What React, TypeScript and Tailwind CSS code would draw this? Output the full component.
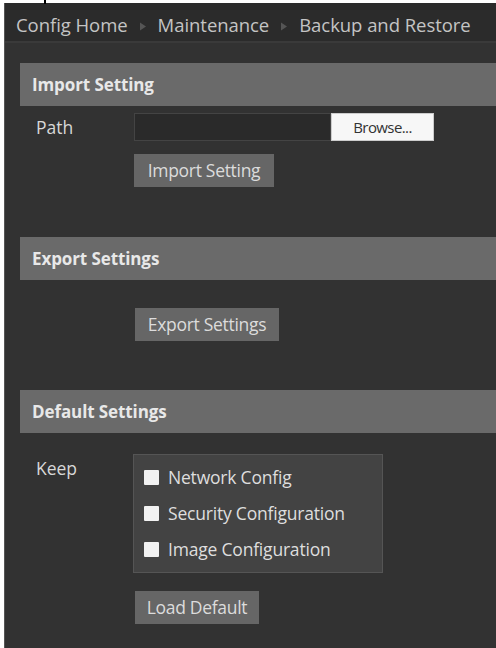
import React from "react";

const font = { fontFamily: '"Open Sans", "Noto Sans", "Liberation Sans", sans-serif' };

function Header({ title }: { title: string }) {
  return (
    <div className="ml-[15px] h-[43px] bg-[#6a6a6a] flex items-center pl-[12px]">
      <span className="text-[17px] font-bold text-[#e8e8e8] tracking-[-0.1px]">{title}</span>
    </div>
  );
}

function Btn({ label, w }: { label: string; w: string }) {
  return (
    <div
      className={`${w} h-[33px] bg-[#666666] flex items-center justify-center text-[17.5px] text-[#dcdcdc] tracking-[-0.3px]`}
    >
      {label}
    </div>
  );
}

function Tri() {
  return (
    <svg width="8" height="9" viewBox="0 0 8 9" className="mx-[11px] mt-[2px]">
      <path d="M1 0.5 L7 4.5 L1 8.5 Z" fill="#555555" />
    </svg>
  );
}

function Check({ label }: { label: string }) {
  return (
    <div className="flex items-center h-[36px]">
      <div className="w-[15px] h-[15px] bg-[#f2f2f2] rounded-[1px]" />
      <span className="ml-[9px] text-[17.5px] text-[#dedede] tracking-[-0.2px]">{label}</span>
    </div>
  );
}

export default function App() {
  return (
    <div className="relative w-[496px] h-[648px] bg-white pt-[3px] pl-[4px]" style={font}>
      <div className="absolute left-[44px] top-0 w-[2px] h-[4px] bg-black" />
      <div className="h-[645px] bg-[#323232] border-l border-[#555]">
        <div className="h-[40px] bg-[#2b2b2b] border-b-[2px] border-[#3a3a3a] flex items-center pl-[11px] pt-[6px] text-[18.5px] text-[#c4c4c4] tracking-[-0.05px]">
          <span>Config Home</span>
          <Tri />
          <span>Maintenance</span>
          <Tri />
          <span>Backup and Restore</span>
        </div>

        <div className="mt-[20px]">
          <Header title="Import Setting" />
          <div className="flex mt-[7px]">
            <div className="w-[129px] pl-[31px] pt-[1px] text-[17.5px] text-[#d8d8d8]">Path</div>
            <div className="flex h-[28px]">
              <div className="w-[197px] bg-[#2a2a2a] border border-[#444]" />
              <div className="w-[103px] bg-[#f7f7f7] border border-[#ccc] flex items-center justify-center text-[15px] text-[#333] tracking-[-0.6px]">
                Browse...
              </div>
            </div>
          </div>
          <div className="ml-[129px] mt-[13px]">
            <Btn label="Import Setting" w="w-[140px]" />
          </div>
        </div>

        <div className="mt-[50px]">
          <Header title="Export Settings" />
          <div className="ml-[130px] mt-[28px]">
            <Btn label="Export Settings" w="w-[144px]" />
          </div>
        </div>

        <div className="mt-[49px]">
          <Header title="Default Settings" />
          <div className="flex mt-[21px]">
            <div className="w-[128px] pl-[31px] pt-[1px] text-[17.5px] text-[#d8d8d8]">Keep</div>
            <div className="w-[250px] h-[119px] bg-[#434343] border border-[#555] pl-[10px] pt-[4px] flex flex-col">
              <Check label="Network Config" />
              <Check label="Security Configuration" />
              <Check label="Image Configuration" />
            </div>
          </div>
          <div className="ml-[130px] mt-[18px]">
            <Btn label="Load Default" w="w-[124px]" />
          </div>
        </div>
      </div>
    </div>
  );
}
